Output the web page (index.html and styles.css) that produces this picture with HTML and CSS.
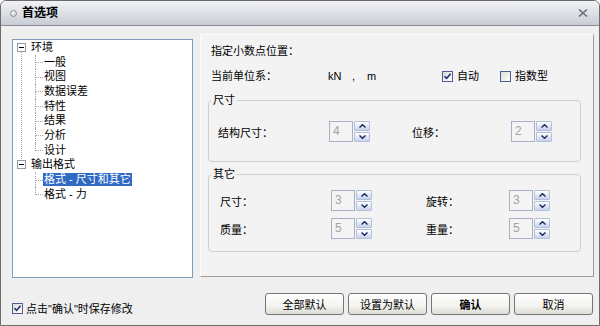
FILE: index.html
```html
<!DOCTYPE html>
<html lang="zh-CN">
<head>
  <meta charset="UTF-8" />
  <title>首选项</title>
  <link rel="stylesheet" href="styles.css">
</head>
<body>

  <div class="window">
    <div class="titlebar">
      <span class="app-icon"></span>
      <span class="title">首选项</span>
      <span class="close">
        <svg width="10" height="8" viewBox="0 0 10 8"><path d="M1 0.5 L9 7.5 M9 0.5 L1 7.5" stroke="#6e7177" stroke-width="1.6" fill="none"/></svg>
      </span>
    </div>

    <div class="main">
      <div class="tree">
        <ul class="roots">
          <li class="node">
            <div class="node-row"><span class="expander"></span><span class="label">环境</span></div>
            <ul class="children">
              <li><span class="label">一般</span></li>
              <li><span class="label">视图</span></li>
              <li><span class="label">数据误差</span></li>
              <li><span class="label">特性</span></li>
              <li><span class="label">结果</span></li>
              <li><span class="label">分析</span></li>
              <li><span class="label">设计</span></li>
            </ul>
          </li>
          <li class="node">
            <div class="node-row"><span class="expander"></span><span class="label">输出格式</span></div>
            <ul class="children">
              <li><span class="label selected">格式 - 尺寸和其它</span></li>
              <li><span class="label">格式 - 力</span></li>
            </ul>
          </li>
        </ul>
      </div>

      <div class="panel">
        <div class="text-row">指定小数点位置：</div>
        <div class="text-row unit-row">
          <span class="unit-label">当前单位系：</span>
          <span class="unit-kn">kN</span>
          <span class="unit-comma">,</span>
          <span class="unit-m">m</span>
          <label class="check check-auto">
            <span class="box">
              <svg width="9" height="9" viewBox="0 0 9 9"><path d="M1.5 4.2 L3.6 6.4 L7.6 1.8" stroke="#1b2a78" stroke-width="1.6" fill="none"/></svg>
            </span>自动
          </label>
          <label class="check check-exp"><span class="box"></span>指数型</label>
        </div>

        <fieldset class="group group-size">
          <legend>尺寸</legend>
          <div class="g-row">
            <span class="g-label">结构尺寸：</span>
            <div class="spin">
              <span class="spin-value">4</span>
              <span class="spin-btns">
                <span class="spin-btn"><svg width="7" height="4" viewBox="0 0 7 4"><path d="M0.5 3.5 L3.5 0.7 L6.5 3.5" stroke="#1d2b5c" stroke-width="1.4" fill="none"/></svg></span>
                <span class="spin-btn"><svg width="7" height="4" viewBox="0 0 7 4"><path d="M0.5 0.5 L3.5 3.3 L6.5 0.5" stroke="#1d2b5c" stroke-width="1.4" fill="none"/></svg></span>
              </span>
            </div>
            <span class="g-label g-label-right">位移：</span>
            <div class="spin">
              <span class="spin-value">2</span>
              <span class="spin-btns">
                <span class="spin-btn"><svg width="7" height="4" viewBox="0 0 7 4"><path d="M0.5 3.5 L3.5 0.7 L6.5 3.5" stroke="#1d2b5c" stroke-width="1.4" fill="none"/></svg></span>
                <span class="spin-btn"><svg width="7" height="4" viewBox="0 0 7 4"><path d="M0.5 0.5 L3.5 3.3 L6.5 0.5" stroke="#1d2b5c" stroke-width="1.4" fill="none"/></svg></span>
              </span>
            </div>
          </div>
        </fieldset>

        <fieldset class="group group-other">
          <legend>其它</legend>
          <div class="g-row">
            <span class="g-label">尺寸：</span>
            <div class="spin">
              <span class="spin-value">3</span>
              <span class="spin-btns">
                <span class="spin-btn"><svg width="7" height="4" viewBox="0 0 7 4"><path d="M0.5 3.5 L3.5 0.7 L6.5 3.5" stroke="#1d2b5c" stroke-width="1.4" fill="none"/></svg></span>
                <span class="spin-btn"><svg width="7" height="4" viewBox="0 0 7 4"><path d="M0.5 0.5 L3.5 3.3 L6.5 0.5" stroke="#1d2b5c" stroke-width="1.4" fill="none"/></svg></span>
              </span>
            </div>
            <span class="g-label g-label-right">旋转：</span>
            <div class="spin">
              <span class="spin-value">3</span>
              <span class="spin-btns">
                <span class="spin-btn"><svg width="7" height="4" viewBox="0 0 7 4"><path d="M0.5 3.5 L3.5 0.7 L6.5 3.5" stroke="#1d2b5c" stroke-width="1.4" fill="none"/></svg></span>
                <span class="spin-btn"><svg width="7" height="4" viewBox="0 0 7 4"><path d="M0.5 0.5 L3.5 3.3 L6.5 0.5" stroke="#1d2b5c" stroke-width="1.4" fill="none"/></svg></span>
              </span>
            </div>
          </div>
          <div class="g-row">
            <span class="g-label">质量：</span>
            <div class="spin">
              <span class="spin-value">5</span>
              <span class="spin-btns">
                <span class="spin-btn"><svg width="7" height="4" viewBox="0 0 7 4"><path d="M0.5 3.5 L3.5 0.7 L6.5 3.5" stroke="#1d2b5c" stroke-width="1.4" fill="none"/></svg></span>
                <span class="spin-btn"><svg width="7" height="4" viewBox="0 0 7 4"><path d="M0.5 0.5 L3.5 3.3 L6.5 0.5" stroke="#1d2b5c" stroke-width="1.4" fill="none"/></svg></span>
              </span>
            </div>
            <span class="g-label g-label-right">重量：</span>
            <div class="spin">
              <span class="spin-value">5</span>
              <span class="spin-btns">
                <span class="spin-btn"><svg width="7" height="4" viewBox="0 0 7 4"><path d="M0.5 3.5 L3.5 0.7 L6.5 3.5" stroke="#1d2b5c" stroke-width="1.4" fill="none"/></svg></span>
                <span class="spin-btn"><svg width="7" height="4" viewBox="0 0 7 4"><path d="M0.5 0.5 L3.5 3.3 L6.5 0.5" stroke="#1d2b5c" stroke-width="1.4" fill="none"/></svg></span>
              </span>
            </div>
          </div>
        </fieldset>
      </div>
    </div>

    <div class="footer">
      <label class="check check-save">
        <span class="box">
          <svg width="9" height="9" viewBox="0 0 9 9"><path d="M1.5 4.2 L3.6 6.4 L7.6 1.8" stroke="#1b2a78" stroke-width="1.6" fill="none"/></svg>
        </span>点击"确认"时保存修改
      </label>
      <div class="buttons">
        <button>全部默认</button>
        <button>设置为默认</button>
        <button class="primary">确认</button>
        <button>取消</button>
      </div>
    </div>
  </div>

</body>
</html>
```

FILE: styles.css
```css
* {
  box-sizing: border-box;
}

html, body {
  margin: 0;
  padding: 0;
}

body {
  width: 600px;
  height: 326px;
  background: #fff;
  font-family: "Liberation Sans", "Noto Sans CJK SC", sans-serif;
  font-size: 11px;
  color: #000;
}

.window {
  width: 600px;
  height: 326px;
  display: flex;
  flex-direction: column;
  border: 1px solid #6c6c6c;
  border-radius: 6px 6px 0 0;
  background: #efefef;
  overflow: hidden;
}

/* title bar */
.titlebar {
  flex: none;
  height: 25px;
  display: flex;
  align-items: center;
  padding: 0 10px 0 9px;
  background: linear-gradient(#f1f2f5, #dfe2e7 45%, #c8ccd4);
  border-bottom: 1px solid #8a8c91;
}

.app-icon {
  width: 7px;
  height: 7px;
  border-radius: 50%;
  border: 1px solid #8d8f95;
  background: radial-gradient(circle at 40% 35%, #fff, #b9bcc4);
  margin-right: 5px;
}

.title {
  font-weight: bold;
  font-size: 12px;
  line-height: 16px;
}

.close {
  margin-left: auto;
  display: flex;
  margin-right: 1px;
}

/* main area */
.main {
  flex: none;
  height: 252px;
  display: flex;
  align-items: flex-start;
  padding-left: 11px;
}

.tree {
  margin-top: 13px;
  width: 181px;
  height: 239px;
  border: 1px solid #7f9db9;
  background: #fff;
}

.tree ul {
  list-style: none;
  margin: 0;
  padding: 0;
}

.node {
  position: relative;
}

.node:not(:last-child)::before {
  content: "";
  position: absolute;
  left: 8px;
  top: 12px;
  bottom: -3px;
  border-left: 1px dotted #a3a3a3;
}

.node-row {
  height: 14.7px;
  display: flex;
  align-items: center;
  padding-left: 4px;
}

.expander {
  width: 9px;
  height: 9px;
  border: 1px solid #919b9c;
  background: #fff;
  display: flex;
  align-items: center;
  justify-content: center;
  margin-right: 4px;
  position: relative;
  z-index: 1;
}

.expander::after {
  content: "";
  width: 5px;
  height: 1px;
  background: #000;
}

.children {
  margin-left: 22px !important;
}

.children li {
  position: relative;
  height: 14.7px;
  display: flex;
  align-items: center;
  padding-left: 8px;
}

.children li::before {
  content: "";
  position: absolute;
  left: 0;
  top: 0;
  height: 50%;
  width: 7px;
  border-left: 1px dotted #a3a3a3;
  border-bottom: 1px dotted #a3a3a3;
}

.children li:not(:last-child)::after {
  content: "";
  position: absolute;
  left: 0;
  top: 50%;
  bottom: 0;
  border-left: 1px dotted #a3a3a3;
}

.label {
  line-height: 13px;
  padding: 0 1px;
  white-space: nowrap;
}

.label.selected {
  background: #316ac5;
  color: #fff;
}

/* right panel */
.panel {
  margin-top: 8px;
  margin-left: 7px;
  width: 394px;
  height: 243px;
  border: 1px solid;
  border-color: #fdfdfd #9d9d9d #9d9d9d #fdfdfd;
  background: #f3f3f3;
  padding: 8px 12px 0 7px;
}

.text-row {
  height: 16px;
  line-height: 16px;
  padding-left: 3px;
  white-space: nowrap;
}

.unit-row {
  margin-top: 9px;
  display: flex;
  align-items: center;
}

.unit-label {
  width: 117px;
}

.unit-kn {
  width: 24px;
}

.unit-comma {
  width: 15px;
}

.unit-m {
  width: 75px;
}

.check {
  display: flex;
  align-items: center;
  white-space: nowrap;
}

.check .box {
  width: 11px;
  height: 11px;
  border: 1px solid #4d5f8f;
  background: linear-gradient(135deg, #dcdcd6, #fff);
  display: flex;
  align-items: center;
  justify-content: center;
  margin-right: 4px;
}

.check-exp {
  margin-left: 21px;
}

/* group boxes */
.group {
  margin: 8px 0 0 0;
  padding: 13px 0 19px 0;
  border: 1px solid #d0d0c4;
  border-radius: 4px;
  min-width: 0;
}

.group legend {
  margin-left: 2px;
  padding: 0 2px;
  height: 16px;
  line-height: 16px;
}

.group-other {
  margin-top: 4px;
  padding: 8px 0 12px 0;
}

.g-row {
  height: 21px;
  display: flex;
  align-items: center;
  padding-left: 9px;
}

.g-row + .g-row {
  margin-top: 7px;
}

.group-other .g-row {
  padding-left: 11px;
}

.g-label {
  width: 111px;
  white-space: nowrap;
}

.g-label-right {
  width: 99px;
  margin-left: 42px;
}

.group-other .g-label-right {
  width: 83px;
  margin-left: 54px;
}

/* spinners */
.spin {
  display: flex;
  height: 21px;
}

.spin-value {
  width: 24px;
  height: 21px;
  border: 1px solid #a8b0c8;
  background: #f4f4f4;
  color: #a3a3a3;
  font-size: 12px;
  line-height: 19px;
  padding-left: 3px;
  margin-right: 1px;
}

.spin-btns {
  display: flex;
  flex-direction: column;
  gap: 1px;
  width: 16px;
}

.spin-btn {
  flex: 1;
  display: flex;
  align-items: center;
  justify-content: center;
  border: 1px solid #b4bfd9;
  border-radius: 1px;
  background: linear-gradient(#ffffff, #dde5f5 60%, #c5d1ec);
}

/* footer */
.footer {
  flex: 1;
  display: flex;
  align-items: flex-start;
  padding: 15px 6px 0 11px;
}

.check-save {
  margin-top: 7px;
}

.check-save .box {
  margin-right: 3px;
}

.buttons {
  margin-left: auto;
  display: flex;
  gap: 4px;
}

.buttons button {
  width: 79px;
  height: 22px;
  padding: 0;
  font-family: "Liberation Sans", "Noto Sans CJK SC", sans-serif;
  font-size: 11px;
  color: #000;
  border: 1px solid #767676;
  border-radius: 3px;
  background: linear-gradient(#fefefe, #f3f3ef 60%, #dcdbd4);
}

.buttons button.primary {
  font-weight: bold;
}
```
